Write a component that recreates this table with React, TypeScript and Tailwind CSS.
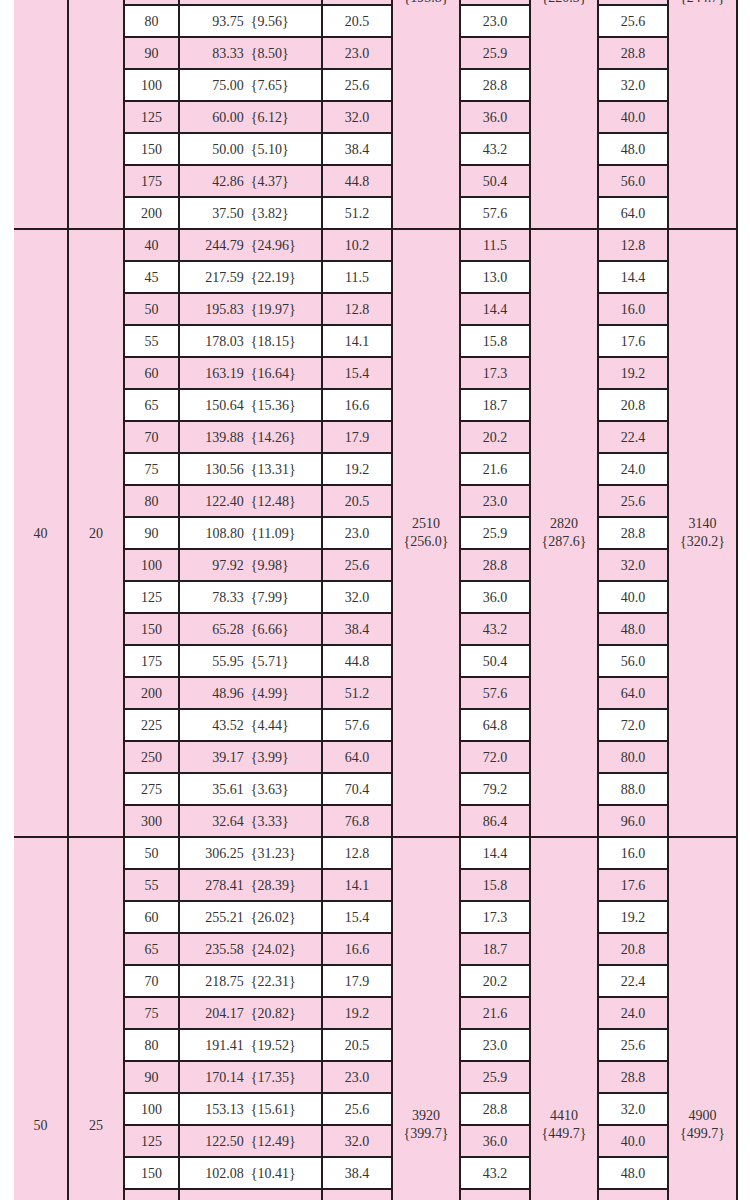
import React from "react";

type Row = { len: number; torque: string; kgf: string };
type Group = { dia: string; half: string; m1: [string, string]; m2: [string, string]; m3: [string, string]; rows: Row[] };

const r = (len: number, torque: string, kgf: string): Row => ({ len, torque, kgf });

const groups: Group[] = [
  {
    dia: "35",
    half: "17.5",
    m1: ["1920", "{195.8}"],
    m2: ["2160", "{220.3}"],
    m3: ["2400", "{244.7}"],
    rows: [
      r(40, "187.50", "19.12"),
      r(45, "166.67", "17.00"),
      r(50, "150.00", "15.30"),
      r(55, "136.36", "13.91"),
      r(60, "125.00", "12.75"),
      r(65, "115.38", "11.77"),
      r(70, "107.14", "10.93"),
      r(75, "100.00", "10.20"),
      r(80, "93.75", "9.56"),
      r(90, "83.33", "8.50"),
      r(100, "75.00", "7.65"),
      r(125, "60.00", "6.12"),
      r(150, "50.00", "5.10"),
      r(175, "42.86", "4.37"),
      r(200, "37.50", "3.82"),
    ],
  },
  {
    dia: "40",
    half: "20",
    m1: ["2510", "{256.0}"],
    m2: ["2820", "{287.6}"],
    m3: ["3140", "{320.2}"],
    rows: [
      r(40, "244.79", "24.96"),
      r(45, "217.59", "22.19"),
      r(50, "195.83", "19.97"),
      r(55, "178.03", "18.15"),
      r(60, "163.19", "16.64"),
      r(65, "150.64", "15.36"),
      r(70, "139.88", "14.26"),
      r(75, "130.56", "13.31"),
      r(80, "122.40", "12.48"),
      r(90, "108.80", "11.09"),
      r(100, "97.92", "9.98"),
      r(125, "78.33", "7.99"),
      r(150, "65.28", "6.66"),
      r(175, "55.95", "5.71"),
      r(200, "48.96", "4.99"),
      r(225, "43.52", "4.44"),
      r(250, "39.17", "3.99"),
      r(275, "35.61", "3.63"),
      r(300, "32.64", "3.33"),
    ],
  },
  {
    dia: "50",
    half: "25",
    m1: ["3920", "{399.7}"],
    m2: ["4410", "{449.7}"],
    m3: ["4900", "{499.7}"],
    rows: [
      r(50, "306.25", "31.23"),
      r(55, "278.41", "28.39"),
      r(60, "255.21", "26.02"),
      r(65, "235.58", "24.02"),
      r(70, "218.75", "22.31"),
      r(75, "204.17", "20.82"),
      r(80, "191.41", "19.52"),
      r(90, "170.14", "17.35"),
      r(100, "153.13", "15.61"),
      r(125, "122.50", "12.49"),
      r(150, "102.08", "10.41"),
      r(175, "87.50", "8.92"),
      r(200, "76.56", "7.81"),
      r(225, "68.06", "6.94"),
      r(250, "61.25", "6.25"),
      r(275, "55.68", "5.68"),
      r(300, "51.04", "5.20"),
      r(350, "43.75", "4.46"),
    ],
  },
];

const cell = "border-2 border-[#241b1f] p-0 text-center align-middle whitespace-nowrap";
const pink = "bg-[#f9d2e4]";

function Merged({ span, lines, className = "" }: { span: number; lines: [string, string]; className?: string }) {
  return (
    <td rowSpan={span} className={`${cell} ${pink} leading-[18px] ${className}`}>
      <div>{lines[0]}</div>
      <div>{lines[1]}</div>
    </td>
  );
}

export default function App() {
  let index = 0;

  return (
    <div className="h-[1200px] overflow-hidden bg-white">
      <table
        className="ml-[14px] -mt-[252px] w-[723px] table-fixed border-collapse text-[14px] text-[#333]"
        style={{ fontFamily: '"Liberation Serif", "Noto Sans CJK SC", serif' }}
      >
        <colgroup>
          <col className="w-[54px]" />
          <col className="w-[56px]" />
          <col className="w-[55px]" />
          <col className="w-[143px]" />
          <col className="w-[70px]" />
          <col className="w-[68px]" />
          <col className="w-[70px]" />
          <col className="w-[68px]" />
          <col className="w-[70px]" />
          <col className="w-[69px]" />
        </colgroup>
        <tbody>
          {groups.map((g) =>
            g.rows.map((row, i) => {
              const bg = index++ % 2 === 0 ? "bg-white" : pink;
              const span = g.rows.length;
              return (
                <tr key={`${g.dia}-${row.len}`} className="h-[32px]">
                  {i === 0 && (
                    <td rowSpan={span} className={`${cell} ${pink} border-l-0`}>
                      {g.dia}
                    </td>
                  )}
                  {i === 0 && (
                    <td rowSpan={span} className={`${cell} ${pink}`}>
                      {g.half}
                    </td>
                  )}
                  <td className={`${cell} ${bg}`}>{row.len}</td>
                  <td className={`${cell} ${bg} whitespace-pre`}>{`${row.torque}  {${row.kgf}}`}</td>
                  <td className={`${cell} ${bg}`}>{(row.len * 0.256).toFixed(1)}</td>
                  {i === 0 && <Merged span={span} lines={g.m1} />}
                  <td className={`${cell} ${bg}`}>{(row.len * 0.288).toFixed(1)}</td>
                  {i === 0 && <Merged span={span} lines={g.m2} />}
                  <td className={`${cell} ${bg}`}>{(row.len * 0.32).toFixed(1)}</td>
                  {i === 0 && <Merged span={span} lines={g.m3} />}
                </tr>
              );
            })
          )}
        </tbody>
      </table>
    </div>
  );
}
